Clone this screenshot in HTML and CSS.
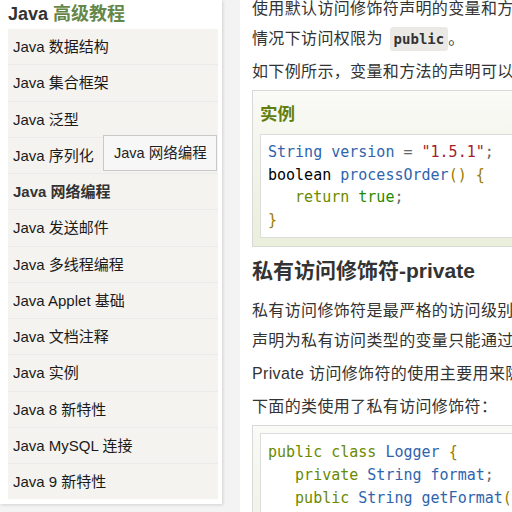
FILE: index.html
```html
<!DOCTYPE html>
<html lang="zh-CN">
<head>
<meta charset="utf-8">
<title>Java 修饰符</title>
<link rel="stylesheet" href="styles.css">
</head>
<body>
<div class="page">
  <aside class="side">
    <h2 class="side-title">Java <span class="accent">高级教程</span></h2>
    <ul class="menu">
      <li><a href="#">Java 数据结构</a></li>
      <li><a href="#">Java 集合框架</a></li>
      <li><a href="#">Java 泛型</a></li>
      <li><a href="#">Java 序列化</a></li>
      <li class="current"><a href="#">Java 网络编程</a></li>
      <li><a href="#">Java 发送邮件</a></li>
      <li><a href="#">Java 多线程编程</a></li>
      <li><a href="#">Java Applet 基础</a></li>
      <li><a href="#">Java 文档注释</a></li>
      <li><a href="#">Java 实例</a></li>
      <li><a href="#">Java 8 新特性</a></li>
      <li><a href="#">Java MySQL 连接</a></li>
      <li><a href="#">Java 9 新特性</a></li>
    </ul>
    <div class="tooltip">Java 网络编程</div>
  </aside>
  <main class="content">
    <p class="first">使用默认访问修饰符声明的变量和方法，对同一个包内的类是可见的。接口里的变量都隐式声明为 public static final,而接口里的方法默认<br>情况下访问权限为 <code class="inline">public</code>。</p>
    <p>如下例所示，变量和方法的声明可以不使用任何修饰符。</p>
    <div class="example">
      <h2 class="example-title">实例</h2>
      <div class="code"><pre><span class="ty">String version</span> <span class="op">=</span> <span class="str">"1.5.1"</span><span class="pn">;</span>
<span class="pl">boolean</span> <span class="ty">processOrder</span><span class="br">()</span> <span class="br">{</span>
   <span class="kw">return</span> <span class="kw2">true</span><span class="pn">;</span>
<span class="br">}</span></pre></div>
    </div>
    <h3 class="heading">私有访问修饰符-private</h3>
    <p>私有访问修饰符是最严格的访问级别，所以被声明为 private 的方法、变量和构造方法只能被所属类访问，并且类和接口不能声明为 private。<br>声明为私有访问类型的变量只能通过类中公共的 getter 方法被外部类访问。</p>
    <p>Private 访问修饰符的使用主要用来隐藏类的实现细节和保护类的数据。</p>
    <p>下面的类使用了私有访问修饰符：</p>
    <div class="example plain">
      <div class="code"><pre><span class="kw">public class</span> <span class="ty">Logger</span> <span class="br">{</span>
   <span class="kw">private</span> <span class="ty">String format</span><span class="pn">;</span>
   <span class="kw">public</span> <span class="ty">String getFormat</span><span class="br">()</span> <span class="br">{</span>
      <span class="kw">return</span> <span class="kw2">this</span><span class="pn">.</span><span class="ty">format</span><span class="pn">;</span>
   <span class="br">}</span>
<span class="br">}</span></pre></div>
    </div>
  </main>
</div>
</body>
</html>
```
FILE: styles.css
```css
html, body {
  margin: 0;
  padding: 0;
  height: 100%;
  overflow: hidden;
}
body {
  background: #f3f3f3;
  font-family: "Liberation Sans", Arial, "Noto Sans CJK SC", sans-serif;
  color: #333;
}
.page {
  display: flex;
  height: 512px;
  gap: 18px;
}
.side {
  position: relative;
  width: 210px;
  flex: none;
  align-self: flex-start;
  background: #fff;
  padding: 0 4px 5px 8px;
  box-shadow: 1px 1px 3px rgba(0, 0, 0, 0.14);
}
.side-title {
  margin: 0;
  height: 29px;
  line-height: 29px;
  font-size: 18px;
  font-weight: bold;
  color: #333;
  white-space: nowrap;
}
.accent {
  color: #64874a;
}
.menu {
  list-style: none;
  margin: 0;
  padding: 0;
  background: #f4f3f0;
}
.menu li {
  height: 36.25px;
  box-sizing: border-box;
  border-bottom: 1px solid #ebebeb;
}
.menu li:last-child {
  border-bottom: none;
  height: 35.25px;
}
.menu a {
  display: block;
  padding: 0 5px;
  line-height: 35.25px;
  font-size: 15px;
  color: #1a1a1a;
  text-decoration: none;
  white-space: nowrap;
}
.menu .current a {
  font-weight: bold;
  color: #333;
}
.tooltip {
  position: absolute;
  left: 103px;
  top: 135px;
  width: 112px;
  height: 34px;
  line-height: 34px;
  box-sizing: content-box;
  border: 1px solid #c9c9c9;
  background: #f7f7f7;
  font-size: 14.5px;
  color: #222;
  text-indent: 10px;
  white-space: nowrap;
}
.content {
  flex: 1;
  min-width: 0;
  background: #fff;
  padding-left: 12px;
  overflow: hidden;
  white-space: nowrap;
}
.content p {
  margin: 0 0 3px;
  font-size: 16px;
  letter-spacing: 0.35px;
  line-height: 30px;
  color: #333;
}
.content p.first {
  margin-top: -6px;
}
.inline {
  font-family: "DejaVu Sans Mono", "Liberation Mono", monospace;
  font-size: 14px;
  font-weight: bold;
  letter-spacing: 0;
  background: #ebe9e6;
  color: #333;
  border-radius: 3px;
  padding: 4px 4px;
  margin-left: 2px;
}
.example {
  border: 1px solid #d9d9d9;
  background: linear-gradient(to bottom, #fafaf7 0, #eef2e2 110px, #e9efd9 160px);
  padding: 5px 0 8px 7px;
  width: 600px;
}
.example.plain {
  padding-top: 7px;
}
.example-title {
  margin: 6px 0 8px;
  font-size: 17.5px;
  line-height: 24px;
  font-weight: bold;
  color: #617f10;
}
.code {
  background: #fff;
  border: 1px solid #dcdcdc;
  padding: 6px 7px;
}
.plain .code {
  padding-top: 7px;
}
.code pre {
  margin: 0;
  font-family: "DejaVu Sans Mono", "Liberation Mono", monospace;
  font-size: 15px;
  line-height: 22.6px;
  color: #000;
}
.ty { color: #2f64ad; }
.op { color: #666; }
.str { color: #a31d2a; }
.pn { color: #666; }
.pl { color: #000; }
.br { color: #9a7b00; }
.kw { color: #6a8a00; }
.kw2 { color: #1f8a00; }
.heading {
  margin: 9px 0 10px;
  font-size: 21px;
  line-height: 30px;
  font-weight: bold;
  color: #333;
}
```
